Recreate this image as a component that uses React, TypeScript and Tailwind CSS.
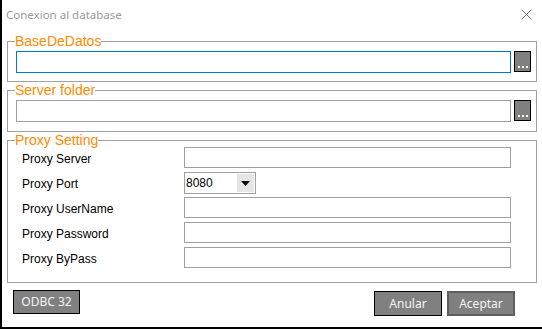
import React from 'react';

const labelFont = { fontFamily: '"Liberation Sans", Arial, sans-serif' };

function BrowseButton() {
  return (
    <button className="w-[17px] h-[21px] bg-[#808080] border-[1.5px] border-black flex items-end justify-center pb-[3px] gap-[2px]">
      <span className="w-[2px] h-[2px] bg-[#fdf6e0]" />
      <span className="w-[2px] h-[2px] bg-[#fdf6e0]" />
      <span className="w-[2px] h-[2px] bg-[#fdf6e0]" />
    </button>
  );
}

function Legend({ children }: { children: React.ReactNode }) {
  return (
    <legend
      className="ml-[7px] text-[14px] leading-[16px] text-[#ff8a00] font-['Liberation_Sans',Arial,sans-serif]"
    >
      {children}
    </legend>
  );
}

const proxyRows = ['Proxy Server', 'Proxy Port', 'Proxy UserName', 'Proxy Password', 'Proxy ByPass'];

export default function App() {
  return (
    <div className="w-[542px] h-[329px] bg-black flex">
      <div className="ml-[2px] w-[540px] h-[327px] bg-white flex flex-col">
        {/* Title bar */}
        <div className="h-[30px] flex items-center justify-between pl-[4px] pr-[10px]">
          <span className="text-[11.5px] text-[#9a9a9a] font-['Noto_Sans',sans-serif]">Conexion al database</span>
          <svg width="11" height="11" viewBox="0 0 11 11" className="mb-[1px]">
            <path d="M0.5 0.5 L10.5 10.5 M10.5 0.5 L0.5 10.5" stroke="#7a7a7a" strokeWidth="1" />
          </svg>
        </div>

        {/* BaseDeDatos */}
        <fieldset className="mx-[5px] mt-[3px] border border-[#a0a0a0] pb-[8px]">
          <Legend>BaseDeDatos</Legend>
          <div className="flex items-start gap-[3px] ml-[8px] mt-[2px]">
            <input className="w-[495px] h-[22px] border border-[#0078d7] outline-none" />
            <BrowseButton />
          </div>
        </fieldset>

        {/* Server folder */}
        <fieldset className="mx-[5px] border border-[#a0a0a0] pb-[9px]">
          <Legend>Server folder</Legend>
          <div className="flex items-start gap-[3px] ml-[8px] mt-[2px]">
            <input className="w-[495px] h-[22px] border border-[#a0a0a0] outline-none" />
            <BrowseButton />
          </div>
        </fieldset>

        {/* Proxy Setting */}
        <fieldset className="mx-[5px] border border-[#a0a0a0] pb-[14px]">
          <Legend>Proxy Setting</Legend>
          <div className="grid grid-cols-[162px_327px] auto-rows-[21px] gap-y-[4px] pl-[14px] -mt-[1px]" style={labelFont}>
            {proxyRows.map((label) => (
              <React.Fragment key={label}>
                <span className="text-[12px] leading-[25px] h-[21px] text-black">{label}</span>
                {label === 'Proxy Port' ? (
                  <div className="w-[72px] h-[22px] border border-[#a0a0a0] flex items-stretch">
                    <span className="flex-1 text-[12px] leading-[20px] pl-[1px] text-black">8080</span>
                    <span className="w-[17px] m-[1px] bg-[#e5e5e5] flex items-center justify-center">
                      <svg width="9" height="5" viewBox="0 0 9 5">
                        <path d="M0 0 H9 L4.5 5 Z" fill="#000" />
                      </svg>
                    </span>
                  </div>
                ) : (
                  <input className="w-[327px] h-[21px] border border-[#a0a0a0] outline-none" />
                )}
              </React.Fragment>
            ))}
          </div>
        </fieldset>

        {/* Footer buttons */}
        <div className="flex items-start justify-between pl-[11px] pr-[27px] mt-[7px] text-[12px] text-[#f4f4f4] font-['Noto_Sans',sans-serif]">
          <button className="w-[67px] h-[24px] bg-[#808080] border border-black">ODBC 32</button>
          <div className="flex gap-[5px] mt-[1px]">
            <button className="w-[68px] h-[25px] bg-[#808080] border-[1.5px] border-black">Anular</button>
            <button className="w-[68px] h-[25px] bg-[#808080] border-2 border-[#5e5e5e]">Aceptar</button>
          </div>
        </div>
      </div>
    </div>
  );
}
